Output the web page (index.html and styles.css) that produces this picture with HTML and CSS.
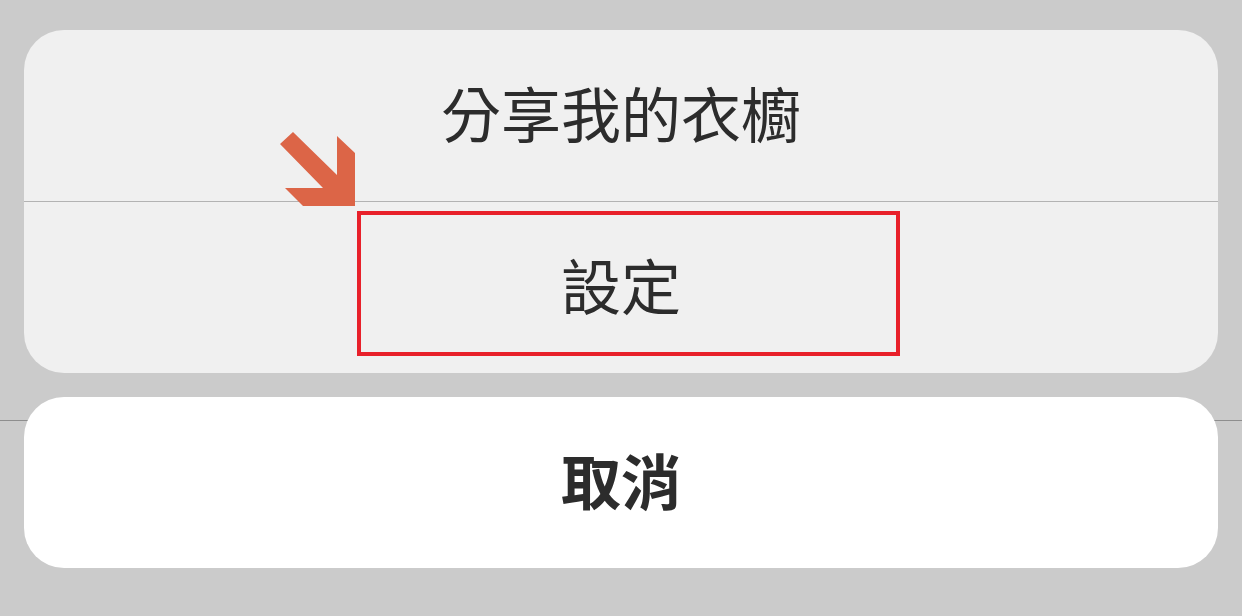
FILE: index.html
```html
<!DOCTYPE html>
<html lang="zh-Hant">
<head>
<meta charset="utf-8">
<title>分享我的衣櫥</title>
<link rel="stylesheet" href="styles.css">
</head>
<body>
<div class="sheet">
  <div class="group">
    <div class="action">分享我的衣櫥</div>
    <div class="divider"></div>
    <div class="action">設定</div>
    <svg class="arrow" width="75" height="75" viewBox="0 0 75 75"><polygon points="13,1 57,44 57,5 75,22 75,75 23,75 5,57 43,57 0,13" fill="#dc6547"/></svg>
    <div class="highlight"></div>
  </div>
  <div class="cancel">取消</div>
</div>
</body>
</html>
```
FILE: styles.css
```css
html, body {
  margin: 0;
  padding: 0;
}
body {
  width: 1242px;
  height: 616px;
  background: #cbcbcb;
  position: relative;
  overflow: hidden;
  font-family: "Noto Sans CJK TC", "Noto Sans", sans-serif;
  color: #2c2c2c;
}
body::before {
  content: "";
  position: absolute;
  left: 0;
  right: 0;
  top: 420px;
  height: 1px;
  background: #8e8e8e;
}
.sheet {
  position: relative;
  display: flex;
  flex-direction: column;
  gap: 24px;
  padding: 30px 24px 0 24px;
}
.group {
  position: relative;
  background: #f0f0f0;
  border-radius: 40px;
  display: flex;
  flex-direction: column;
  height: 343px;
}
.action {
  flex: 1;
  display: flex;
  align-items: center;
  justify-content: center;
  font-size: 60px;
  font-weight: 400;
  line-height: 1;
  padding-bottom: 8px;
}
.divider {
  height: 1px;
  background: #b3b3b3;
}
.cancel {
  position: relative;
  background: #ffffff;
  border-radius: 40px;
  height: 171px;
  box-sizing: border-box;
  display: flex;
  align-items: center;
  justify-content: center;
  font-size: 60px;
  font-weight: 700;
  line-height: 1;
  padding-bottom: 8px;
}
.arrow {
  position: absolute;
  left: 256px;
  top: 101px;
}
.highlight {
  position: absolute;
  left: 333px;
  top: 181px;
  width: 535px;
  height: 137px;
  border: 4px solid #e8202a;
}
```
